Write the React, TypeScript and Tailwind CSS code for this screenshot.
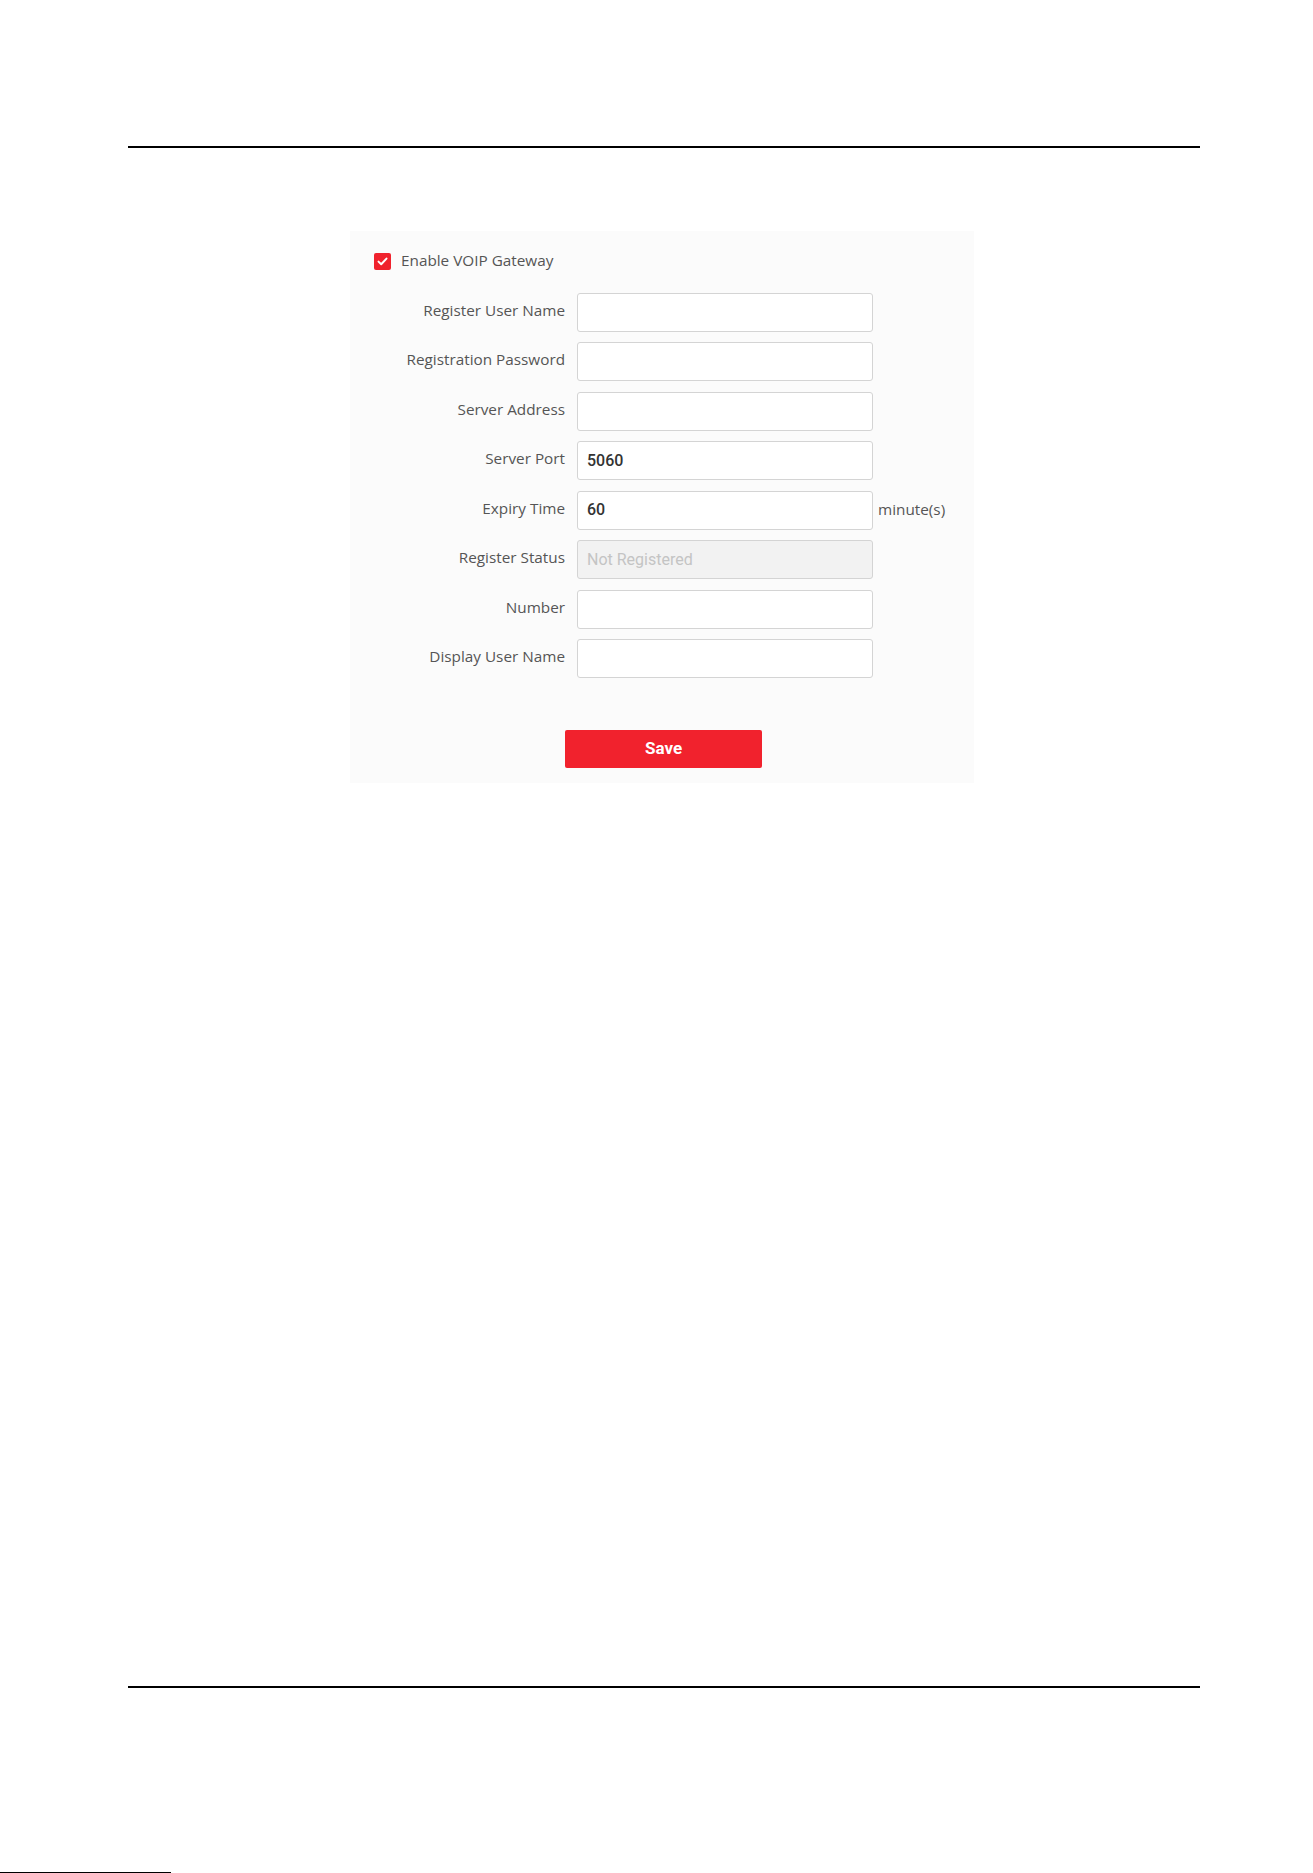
import React from "react";

const rows: { label: string; value?: string; disabled?: boolean; suffix?: string }[] = [
  { label: "Register User Name" },
  { label: "Registration Password" },
  { label: "Server Address" },
  { label: "Server Port", value: "5060" },
  { label: "Expiry Time", value: "60", suffix: "minute(s)" },
  { label: "Register Status", value: "Not Registered", disabled: true },
  { label: "Number" },
  { label: "Display User Name" },
];

export default function App() {
  return (
    <div className="relative w-[1313px] h-[1873px] bg-white overflow-hidden" style={{ fontFamily: '"Open Sans", "Noto Sans", sans-serif' }}>
      <div className="pt-[146px]">
        <div className="ml-[128px] w-[1072px] h-[2px] bg-black" />
        <div className="ml-[350px] mt-[83px] w-[624px] h-[552px] bg-[#fbfbfb] pt-[22px] pl-[24px] flex flex-col">
          <div className="flex items-center h-[17px]">
            <div className="w-[17px] h-[17px] rounded-[2px] bg-[#f0222d] flex items-center justify-center">
              <svg width="11" height="9" viewBox="0 0 11 9" fill="none">
                <path d="M1.5 4.6 L4.2 7.2 L9.5 1.6" stroke="white" strokeWidth="2" strokeLinecap="round" strokeLinejoin="round" />
              </svg>
            </div>
            <span className="ml-[10px] text-[15.3px] text-[#555] leading-none pb-[2px]">Enable VOIP Gateway</span>
          </div>
          <div className="mt-[22.7px] flex flex-col gap-[10.5px] -ml-[24px]">
            {rows.map((r) => (
              <div key={r.label} className="flex items-center h-[39px]">
                <div className="w-[215px] text-right text-[15.3px] text-[#555] pb-[4px]">{r.label}</div>
                <div
                  className={
                    "ml-[12px] w-[296px] h-[39px] rounded-[3px] border border-[#d4d4d4] flex items-center px-[9px] text-[16px] font-medium " +
                    (r.disabled ? "bg-[#f2f2f2] text-[#c4c4c4] font-normal" : "bg-white text-[#333]")
                  }
                  style={{ fontFamily: 'Roboto, "Liberation Sans", sans-serif' }}
                >
                  {r.value}
                </div>
                {r.suffix && <span className="ml-[5px] text-[15.3px] text-[#555] pb-[2px]">{r.suffix}</span>}
              </div>
            ))}
          </div>
          <div className="mt-[52px] -ml-[24px] pl-[215px]">
            <button
              className="w-[197px] h-[38px] rounded-[2px] bg-[#f1222d] text-white text-[17px] font-bold flex items-center justify-center"
              style={{ fontFamily: 'Roboto, "Liberation Sans", sans-serif' }}
            >
              Save
            </button>
          </div>
        </div>
        <div className="ml-[128px] mt-[903px] w-[1072px] h-[2px] bg-black" />
      </div>
      <div className="absolute left-0 bottom-0 w-[171px] h-[1px] bg-black" />
    </div>
  );
}
